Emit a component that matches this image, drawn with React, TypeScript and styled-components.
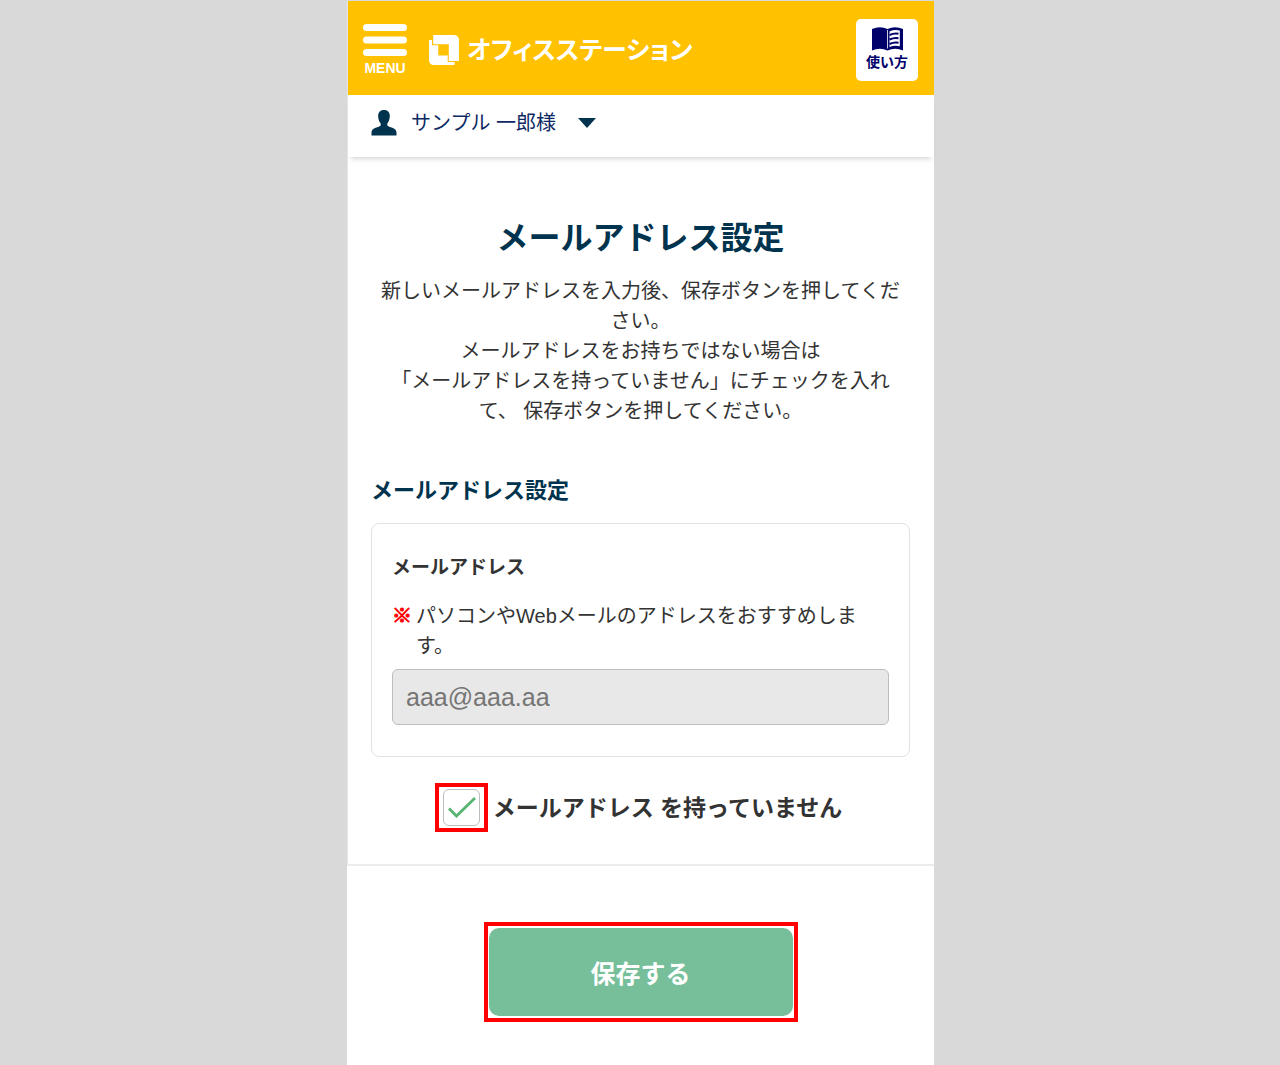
import React, { useState } from "react";
import styled, { createGlobalStyle } from "styled-components";

const GlobalStyle = createGlobalStyle`
  *, *::before, *::after { box-sizing: border-box; }
  body {
    margin: 0;
    background: #d9d9d9;
    color: #333;
    font-family: "Liberation Sans", "Noto Sans CJK JP", sans-serif;
    font-size: 20px;
    line-height: 30px;
  }
  h1, h2, h3, p { margin: 0; }
  button, input { font-family: inherit; }
`;

const Screen = styled.div`
  max-width: 588px;
  min-height: 100vh;
  margin: 0 auto;
  padding: 1px 0 0 1px;
  background: linear-gradient(#d9d9d9 1px, transparent 1px),
    linear-gradient(90deg, #d9d9d9 1px, #fff 1px);
`;

const Upper = styled.div`
  border-left: 1px solid #e6e6e6;
`;

const Header = styled.header`
  display: flex;
  align-items: center;
  height: 94px;
  padding: 3px 16px 0 15px;
  background: #ffc100;
`;

const MenuButton = styled.button`
  display: flex;
  flex-direction: column;
  align-items: center;
  gap: 4px;
  padding: 0;
  border: 0;
  background: none;
  color: #fff;
  font-size: 14px;
  font-weight: 700;
  line-height: 16px;
  cursor: pointer;
`;

const Brand = styled.a`
  display: flex;
  align-items: center;
  gap: 8px;
  margin-left: 22px;
  color: #fff;
  font-size: 25px;
  font-weight: 700;
  font-feature-settings: "palt";
  white-space: nowrap;
  text-decoration: none;
`;

const GuideLink = styled.a`
  display: flex;
  flex-direction: column;
  align-items: center;
  gap: 1px;
  width: 62px;
  height: 62px;
  margin-left: auto;
  padding-top: 8px;
  border-radius: 5px;
  background: #fff;
  color: #00006b;
  font-size: 14px;
  font-weight: 700;
  line-height: 20px;
  text-decoration: none;
`;

const UserBar = styled.div`
  height: 62px;
  padding: 13px 23px;
  box-shadow: 0 5px 5px -3px rgba(0, 0, 0, 0.16);
`;

const UserButton = styled.button`
  display: flex;
  align-items: center;
  padding: 0;
  border: 0;
  background: none;
  color: #0e2a63;
  font-size: 20px;
  line-height: 30px;
  cursor: pointer;
`;

const UserName = styled.span`
  margin: 0 22px 0 14px;
`;

const Main = styled.main`
  padding: 57px 24px 32px 23px;
`;

const Title = styled.h1`
  color: #00334d;
  font-size: 32px;
  line-height: 48px;
  text-align: center;
`;

const Lead = styled.p`
  margin-top: 14px;
  padding: 0 7px;
  text-align: center;
`;

const SectionTitle = styled.h2`
  margin-top: 50px;
  color: #00334d;
  font-size: 22px;
  line-height: 30px;
`;

const Card = styled.div`
  margin-top: 17px;
  padding: 29px 20px 31px;
  border: 1px solid #e2e2e2;
  border-radius: 8px;
`;

const FieldLabel = styled.label`
  display: block;
  font-size: 19px;
  font-weight: 700;
  line-height: 30px;
`;

const Note = styled.p`
  display: flex;
  gap: 4px;
  margin-top: 18px;
`;

const Mark = styled.span`
  flex: none;
  color: #f00;
  font-weight: 700;
  -webkit-text-stroke: 1px #f00;
`;

const MailInput = styled.input`
  display: block;
  width: 100%;
  height: 56px;
  margin-top: 8px;
  padding: 0 13px;
  border: 1px solid #bdbdbd;
  border-radius: 6px;
  background: #e8e8e8;
  color: #333;
  font-size: 25px;
  &::placeholder { color: #757575; opacity: 1; }
`;

const CheckRow = styled.div`
  display: flex;
  align-items: center;
  justify-content: center;
  gap: 5px;
  margin-top: 26px;
  padding-right: 4px;
  font-size: 23px;
  font-weight: 700;
`;

const Highlight = styled.div<{ $pad: string }>`
  display: inline-flex;
  padding: ${(p) => p.$pad};
  border: 4px solid #f00;
`;

const CheckBox = styled.div`
  position: relative;
  display: flex;
  width: 37px;
  height: 37px;
  svg {
    position: absolute;
    inset: 0;
    pointer-events: none;
  }
`;

const CheckInput = styled.input`
  appearance: none;
  width: 100%;
  height: 100%;
  margin: 0;
  border: 1px solid #bdbdbd;
  border-radius: 6px;
  background: #fff;
  cursor: pointer;
`;

const Footer = styled.footer`
  display: flex;
  justify-content: center;
  padding: 56px 0 43px;
  border-top: 2px solid #ececec;
`;

const SaveButton = styled.button`
  width: 304px;
  max-width: 100%;
  height: 88px;
  border: 0;
  border-radius: 10px;
  background: #77bf9b;
  color: #fff;
  font-size: 25px;
  font-weight: 700;
  cursor: pointer;
`;

const MenuIcon = () => (
  <svg width="44" height="32" viewBox="0 0 44 32" fill="#fff" aria-hidden="true">
    <rect width="44" height="7" rx="3.5" />
    <rect y="12.5" width="44" height="7" rx="3.5" />
    <rect y="25" width="44" height="7" rx="3.5" />
  </svg>
);

const LogoMark = () => (
  <svg width="30" height="30" viewBox="0 0 30 30" fill="#fff" aria-hidden="true">
    <path d="M0 5H3V10.300H9.300V20.500H18.700V27H25.500V30H5Q0 30 0 25Z" />
    <path d="M4.200 0H24.500Q30 0 30 5.500V26H19.800V9.200H4.200Z" />
  </svg>
);

const BookIcon = () => (
  <svg width="31" height="24" viewBox="0 0 31 24" aria-hidden="true">
    <path d="M0 2Q8-1.500 15.500 2Q23-1.500 31 2V23.500Q23 20 15.500 23.500Q8 20 0 23.500Z" fill="#00006b" />
    <path d="M15.500 3V21.500" stroke="#fff" strokeWidth="0.800" />
    <path d="M17.500 4.500Q22.500 2.200 27.800 3.600V19.300Q22.500 18 17.500 20Z" fill="#fff" />
    <path
      d="M17.500 8Q22.500 5.800 26.500 6.800M17.500 12.500Q22.500 10.300 26.500 11.300M17.500 17Q22.500 14.800 26.500 15.800"
      fill="none"
      stroke="#00006b"
      strokeWidth="2"
    />
  </svg>
);

const PersonIcon = () => (
  <svg width="26" height="26" viewBox="0 0 26 26" fill="#00334d" aria-hidden="true">
    <path d="M13 0C17 0 19 2.500 18.800 6.500C18.600 10 17.500 12 16.300 13.500V15.500C17.500 17.300 25.500 17.500 25.500 22.500V25.500H.500V22.500C.500 17.500 8.500 17.300 9.700 15.500V13.500C8.500 12 7.300 10 7.200 6.500C7 2.500 9 0 13 0Z" />
  </svg>
);

const Caret = () => (
  <svg width="18" height="10" viewBox="0 0 18 10" fill="#00334d" aria-hidden="true">
    <path d="M0 0H18L9 10Z" />
  </svg>
);

const CheckMark = () => (
  <svg width="37" height="37" viewBox="0 0 37 37" fill="none" stroke="#57b56f" strokeWidth="2.800" aria-hidden="true">
    <path d="M6 19.500L13.500 27L32 9" />
  </svg>
);

export default function App() {
  const [noMail, setNoMail] = useState(true);

  return (
    <>
      <GlobalStyle />
      <Screen lang="ja">
        <Upper>
          <Header>
            <MenuButton type="button">
              <MenuIcon />
              MENU
            </MenuButton>
            <Brand href="#top">
              <LogoMark />
              オフィスステーション
            </Brand>
            <GuideLink href="#guide">
              <BookIcon />
              使い方
            </GuideLink>
          </Header>
          <UserBar>
            <UserButton type="button">
              <PersonIcon />
              <UserName>サンプル 一郎様</UserName>
              <Caret />
            </UserButton>
          </UserBar>
          <Main>
            <Title>メールアドレス設定</Title>
            <Lead>
              新しいメールアドレスを入力後、保存ボタンを押してください。
              <br />
              メールアドレスをお持ちではない場合は
              <br />
              「メールアドレスを持っていません」にチェックを入れて、 保存ボタンを押してください。
            </Lead>
            <SectionTitle>メールアドレス設定</SectionTitle>
            <Card>
              <FieldLabel htmlFor="mail">メールアドレス</FieldLabel>
              <Note>
                <Mark>※</Mark>
                <span>パソコンやWebメールのアドレスをおすすめします。</span>
              </Note>
              <MailInput id="mail" type="email" placeholder="aaa@aaa.aa" disabled={noMail} />
            </Card>
            <CheckRow>
              <Highlight $pad="2px 4px">
                <CheckBox>
                  <CheckInput
                    id="no-mail"
                    type="checkbox"
                    checked={noMail}
                    onChange={(e) => setNoMail(e.target.checked)}
                  />
                  {noMail && <CheckMark />}
                </CheckBox>
              </Highlight>
              <label htmlFor="no-mail">メールアドレス を持っていません</label>
            </CheckRow>
          </Main>
        </Upper>
        <Footer>
          <Highlight $pad="2px 1px">
            <SaveButton type="button">保存する</SaveButton>
          </Highlight>
        </Footer>
      </Screen>
    </>
  );
}
